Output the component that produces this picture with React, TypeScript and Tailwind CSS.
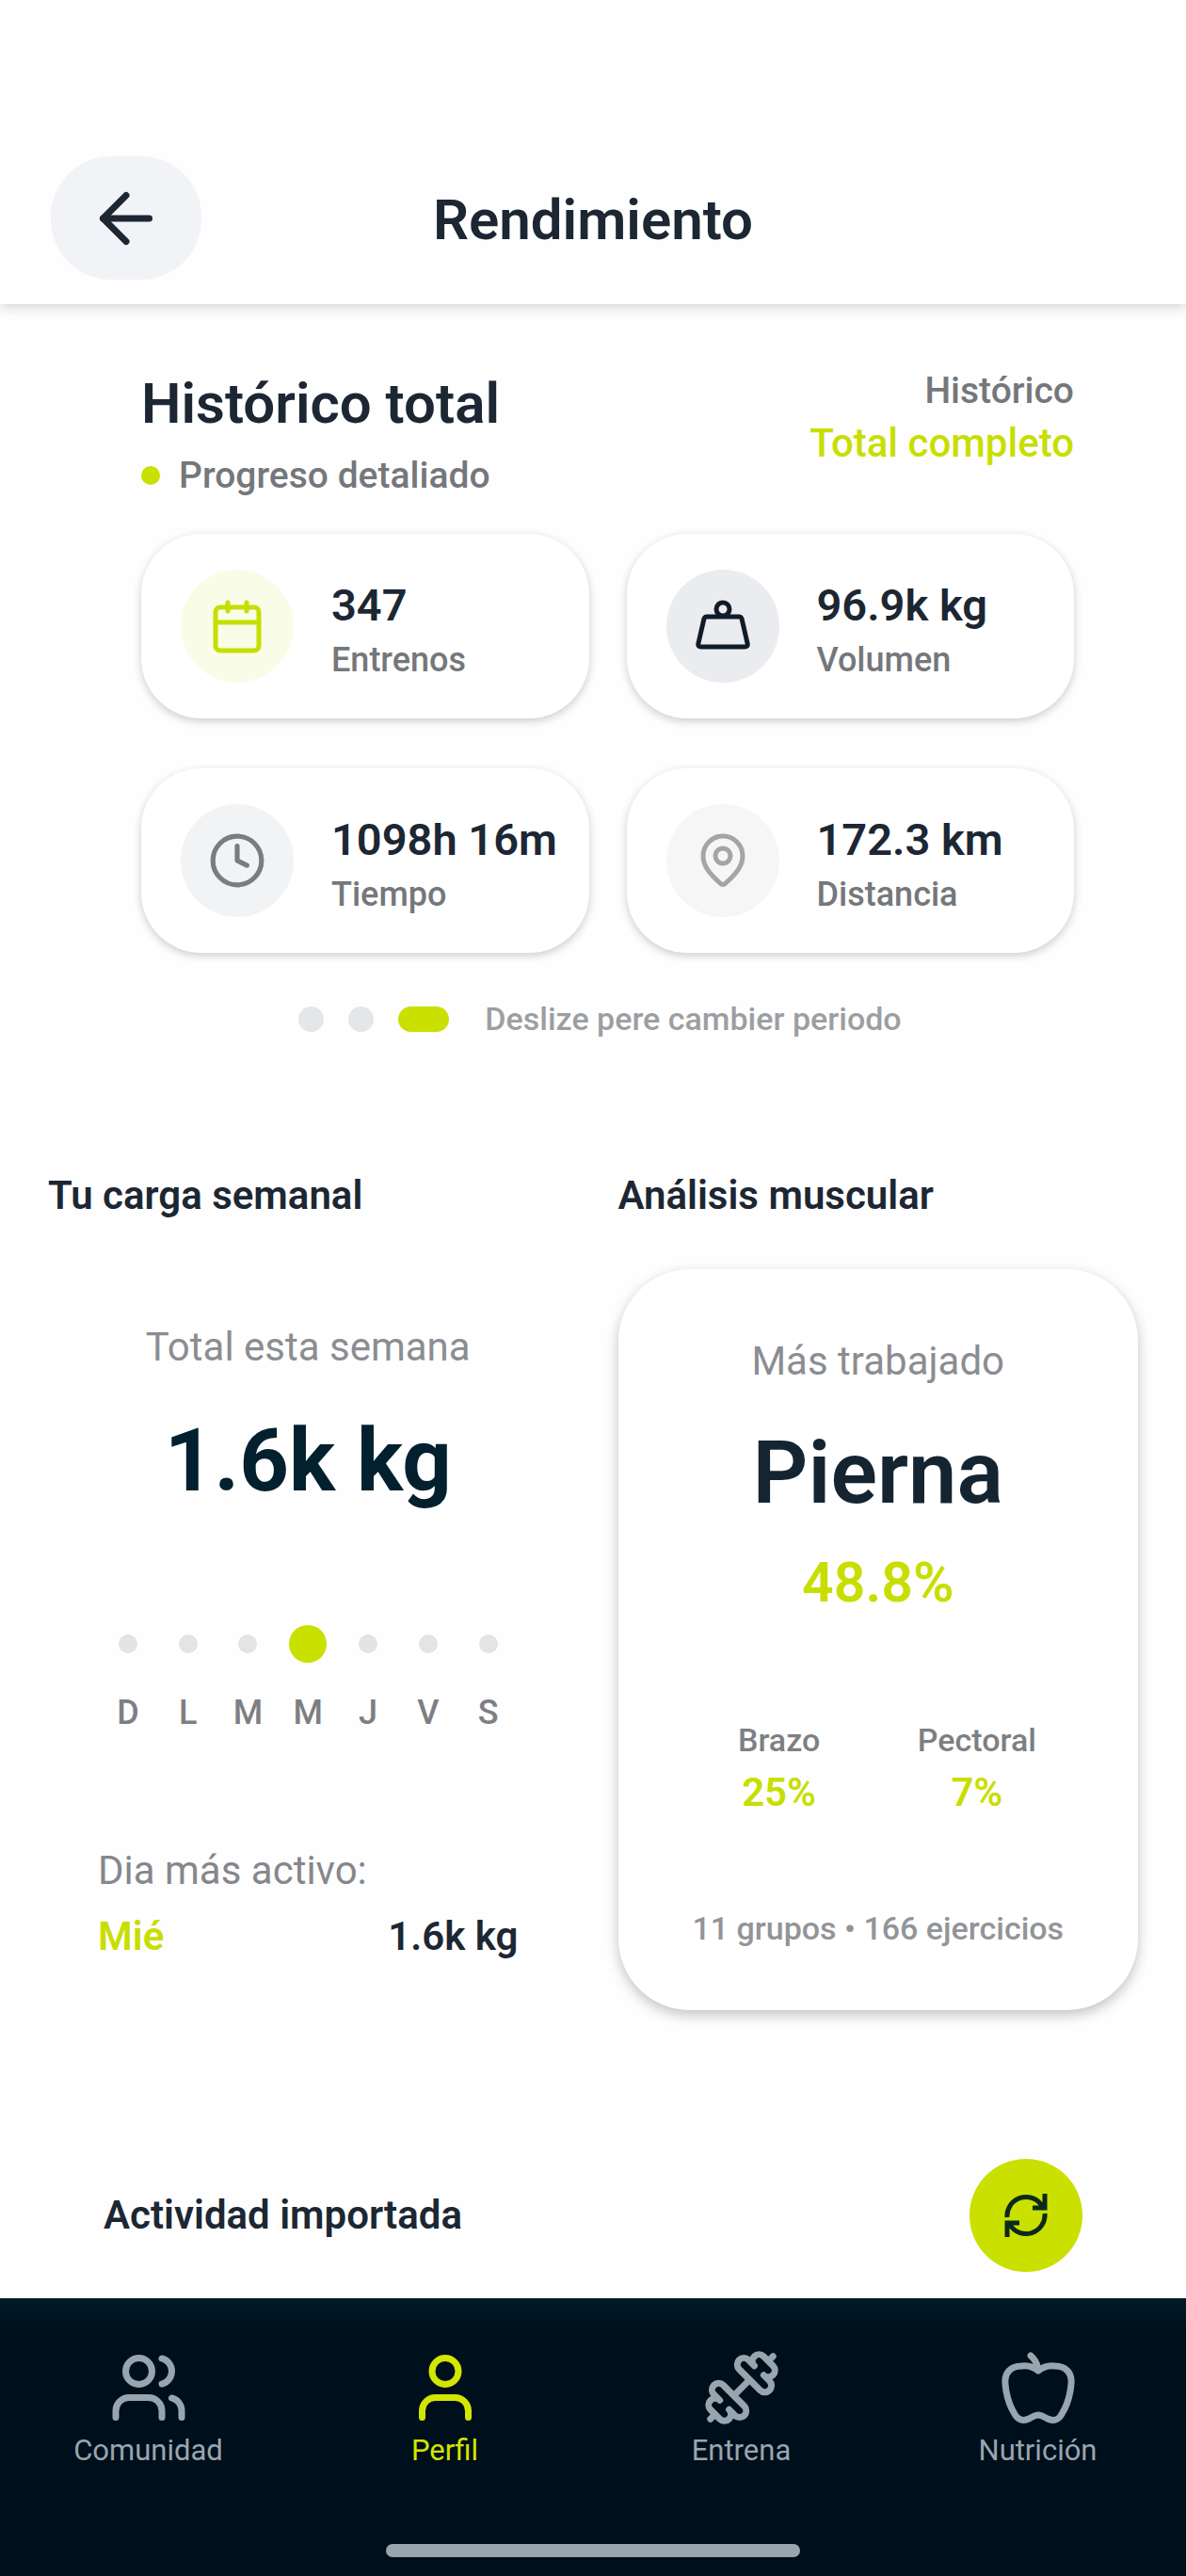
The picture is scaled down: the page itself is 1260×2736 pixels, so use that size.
import { Clock, Users, User, Dumbbell, ArrowLeft } from 'lucide-react'

const stats = [
  { value: '347', label: 'Entrenos', icon: <CalendarIcon />, tone: 'bg-[#f9fde8] text-[#c6de00]' },
  { value: '96.9k kg', label: 'Volumen', icon: <WeightIcon />, tone: 'bg-[#eaecef] text-[#111c28]' },
  { value: '1098h 16m', label: 'Tiempo', icon: <Clock size={62} strokeWidth={2} />, tone: 'bg-[#f2f3f5] text-[#7b7c80]' },
  { value: '172.3 km', label: 'Distancia', icon: <PinIcon />, tone: 'bg-[#f6f6f7] text-[#a4a5a8]' },
]

const days = ['D', 'L', 'M', 'M', 'J', 'V', 'S']
const activeDay = 3

const muscles = [
  { name: 'Brazo', pct: '25%' },
  { name: 'Pectoral', pct: '7%' },
]

const tabs = [
  { label: 'Comunidad', icon: <Users size={84} strokeWidth={2} />, active: false },
  { label: 'Perfil', icon: <User size={84} strokeWidth={2} />, active: true },
  { label: 'Entrena', icon: <Dumbbell size={84} strokeWidth={2} />, active: false },
  { label: 'Nutrición', icon: <AppleIcon />, active: false },
]

function CalendarIcon() {
  return (
    <svg width="60" height="60" viewBox="0 0 60 60" fill="none" stroke="currentColor" strokeWidth="5" strokeLinecap="round">
      <rect x="7" y="10" width="46" height="46" rx="5" />
      <path d="M7 26h46M20 5v9M40 5v9" />
    </svg>
  )
}

function WeightIcon() {
  return (
    <svg width="60" height="60" viewBox="0 0 60 60" fill="none" stroke="currentColor" strokeWidth="5" strokeLinejoin="round">
      <circle cx="30" cy="12" r="7" />
      <path d="M13 20h34q2 0 3 2l6 26q1 4-3 4H7q-4 0-3-4l6-26q1-2 3-2z" />
    </svg>
  )
}

function PinIcon() {
  return (
    <svg width="60" height="60" viewBox="0 0 60 60" fill="none" stroke="currentColor" strokeWidth="5" strokeLinejoin="round">
      <path d="M27 54C16 44 9 36 9 25a21 21 0 0 1 42 0c0 11-7 19-18 29q-3 3-6 0z" />
      <circle cx="30" cy="25" r="8" />
    </svg>
  )
}

function AppleIcon() {
  return (
    <svg width="84" height="84" viewBox="0 0 84 84" fill="none" stroke="currentColor" strokeWidth="7" strokeLinecap="round" strokeLinejoin="round">
      <path d="M42 24C36 19 30 18 24 19C12 19 6 27 7 38C8 50 12 62 17 70C20 76 26 78 32 75C36 73 39 71 42 71C45 71 48 73 52 75C58 78 64 76 67 70C72 62 76 50 77 38C78 27 72 19 60 19C54 18 48 19 42 24z" />
      <path d="M34 8q6 5 8 14" />
    </svg>
  )
}

function SyncIcon() {
  return (
    <svg width="46" height="46" viewBox="0 0 46 46" fill="none" stroke="currentColor" strokeWidth="5">
      <path d="M3 25A20 20 0 0 1 40 13" />
      <path d="M43 0v15H30" />
      <path d="M43 21A20 20 0 0 1 6 33" />
      <path d="M3 46V31h13" />
      <path d="M43 7v8h-8zM3 39v-8h8z" fill="currentColor" stroke="none" />
    </svg>
  )
}

export default function App() {
  return (
    <div className="min-h-screen bg-[#fefefe] flex flex-col font-['Roboto',sans-serif] text-[#1c2733]">
      {/* Cabecera */}
      <header className="grid grid-cols-[160px_1fr_160px] items-center px-[54px] pt-[166px] pb-[26px] bg-[#fefefe] shadow-[0_2px_14px_rgba(0,0,0,0.2)]">
        <button aria-label="Volver" className="h-[131px] rounded-[64px] bg-[#f2f3f6] flex items-center justify-center">
          <ArrowLeft size={84} strokeWidth={2} />
        </button>
        <h1 className="pt-1 text-center text-[60px] leading-[72px] font-semibold">Rendimiento</h1>
      </header>

      <main className="flex-1">
        {/* Histórico */}
        <section className="pl-[150px] pr-[119px] pt-[70px]">
          <div className="flex justify-between">
            <div>
              <h2 className="text-[60px] leading-[72px] font-semibold">Histórico total</h2>
              <p className="mt-[18px] flex items-center gap-5 text-[39px] leading-[44px] font-medium text-[#75777b]">
                <span className="size-5 rounded-full bg-[#c9e000]" />
                Progreso detaliado
              </p>
            </div>
            <div className="text-right font-medium">
              <p className="text-[39px] leading-[44px] text-[#75777b]">Histórico</p>
              <p className="mt-2 text-[42px] leading-[52px] text-[#c8de00]">Total completo</p>
            </div>
          </div>

          <div className="mt-10 grid grid-cols-2 gap-x-10 gap-y-[53px]">
            {stats.map((s) => (
              <div
                key={s.label}
                className="flex items-center gap-10 rounded-[64px] bg-white px-[42px] py-[38px] shadow-[0_3px_10px_rgba(0,0,0,0.2)]"
              >
                <div className={`size-[120px] shrink-0 rounded-full flex items-center justify-center ${s.tone}`}>
                  {s.icon}
                </div>
                <div className="pt-2 whitespace-nowrap font-medium">
                  <p className="text-[47px] leading-[56px] font-semibold">{s.value}</p>
                  <p className="mt-2 text-[36px] leading-[44px] text-[#75777b]">{s.label}</p>
                </div>
              </div>
            ))}
          </div>

          <div className="mt-[50px] pr-4 flex items-center justify-center gap-[26px]">
            <span className="size-[27px] rounded-full bg-[#e5e6e8]" />
            <span className="size-[27px] rounded-full bg-[#e5e6e8]" />
            <span className="w-[54px] h-[27px] rounded-full bg-[#c9e000]" />
            <p className="ml-3 text-[34px] leading-[40px] font-medium text-[#9c9ea2]">Deslize pere cambier periodo</p>
          </div>
        </section>

        <div className="mt-[142px] grid grid-cols-2 gap-[53px] px-[51px]">
          {/* Carga semanal */}
          <section>
            <h3 className="text-[42px] leading-[52px] font-semibold">Tu carga semanal</h3>
            <div className="mt-[52px] px-[53px] pt-[57px]">
              <p className="text-center text-[42px] leading-[52px] text-[#8b8d91]">Total esta semana</p>
              <p className="mt-[39px] text-center text-[92px] leading-[112px] font-bold text-[#03202f]">1.6k kg</p>
              <div className="mt-[118px] grid grid-cols-7 justify-items-center text-[36px] leading-[44px] font-medium text-[#7d7f83]">
                {days.map((d, i) => (
                  <div key={i} className="flex flex-col items-center gap-[31px]">
                    <div className="h-10 flex items-center">
                      <span className={i === activeDay ? 'size-10 rounded-full bg-[#c9e000]' : 'size-5 rounded-full bg-[#e3e4e6]'} />
                    </div>
                    {d}
                  </div>
                ))}
              </div>
              <p className="mt-[120px] text-[42px] leading-[52px] text-[#85878c]">Dia más activo:</p>
              <p className="mt-[18px] flex justify-between text-[42px] leading-[52px] font-semibold">
                <span className="text-[#c8de00]">Mié</span>
                <span>1.6k kg</span>
              </p>
            </div>
          </section>

          {/* Análisis muscular */}
          <section>
            <h3 className="text-[42px] leading-[52px] font-semibold">Análisis muscular</h3>
            <div className="mt-[52px] rounded-[76px] bg-white pt-[72px] pb-[65px] text-center shadow-[0_5px_14px_rgba(0,0,0,0.24)]">
              <p className="text-[42px] leading-[52px] text-[#8b8d91]">Más trabajado</p>
              <p className="mt-[37px] text-[92px] leading-[112px] font-semibold text-[#152431]">Pierna</p>
              <p className="mt-[26px] text-[59px] leading-[68px] font-semibold text-[#c8de00]">48.8%</p>
              <div className="mt-[111px] px-[66px] grid grid-cols-2 font-medium">
                {muscles.map((m) => (
                  <div key={m.name}>
                    <p className="text-[34px] leading-[44px] text-[#7d7f83]">{m.name}</p>
                    <p className="mt-2 text-[42px] leading-[52px] font-semibold text-[#c8de00]">{m.pct}</p>
                  </div>
                ))}
              </div>
              <p className="mt-24 text-[34px] leading-[44px] font-medium text-[#929498]">11 grupos • 166 ejercicios</p>
            </div>
          </section>
        </div>

        {/* Actividad */}
        <section className="mt-[158px] mb-[26px] px-[110px] flex items-center justify-between">
          <h3 className="text-[42px] leading-[52px] font-semibold">Actividad importada</h3>
          <button aria-label="Sincronizar" className="size-[120px] rounded-full bg-[#c9e000] text-[#0b2a1c] flex items-center justify-center">
            <SyncIcon />
          </button>
        </section>
      </main>

      <nav className="bg-linear-to-b from-[#001a25] to-[#000f1c] to-15% pt-[53px] pb-5">
        <div className="grid grid-cols-4">
          {tabs.map((t) => (
            <button
              key={t.label}
              className={`flex flex-col items-center gap-[5px] text-[31px] leading-[40px] ${t.active ? 'text-[#d2e600]' : 'text-[#99a5ae]'}`}
            >
              {t.icon}
              {t.label}
            </button>
          ))}
        </div>
        <div className="mt-[79px] mx-auto w-[440px] h-[14px] rounded-full bg-[#99a5ae]" />
      </nav>
    </div>
  )
}
